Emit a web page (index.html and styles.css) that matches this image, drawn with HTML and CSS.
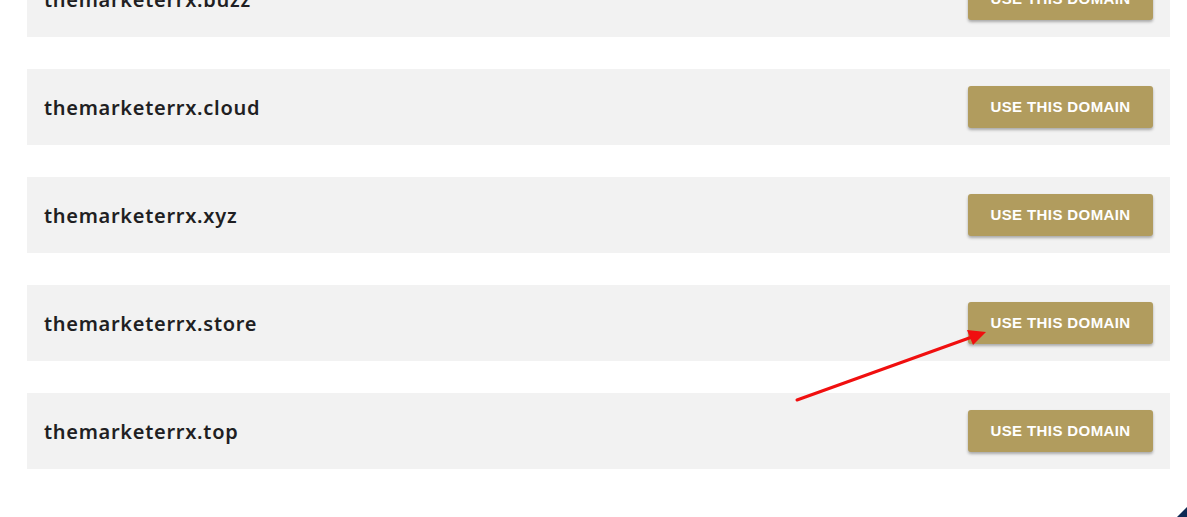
FILE: index.html
```html
<!DOCTYPE html>
<html lang="en">
<head>
  <meta charset="UTF-8" />
  <title>Domain Suggestions</title>
  <meta name="viewport" content="width=device-width, initial-scale=1.0" />
  <link rel="stylesheet" href="styles.css">
</head>
<body>
  <div class="container">
    <ul class="domain-list">
      <li class="domain-row">
        <span class="domain-name">themarketerrx.buzz</span>
        <button class="use-btn">USE THIS DOMAIN</button>
      </li>
      <li class="domain-row">
        <span class="domain-name">themarketerrx.cloud</span>
        <button class="use-btn">USE THIS DOMAIN</button>
      </li>
      <li class="domain-row">
        <span class="domain-name">themarketerrx.xyz</span>
        <button class="use-btn">USE THIS DOMAIN</button>
      </li>
      <li class="domain-row">
        <span class="domain-name">themarketerrx.store</span>
        <button class="use-btn">USE THIS DOMAIN</button>
      </li>
      <li class="domain-row">
        <span class="domain-name">themarketerrx.top</span>
        <button class="use-btn">USE THIS DOMAIN</button>
      </li>
    </ul>
  </div>

  <!-- annotation arrow pointing at the .store button -->
  <svg class="annotation" width="1187" height="517" viewBox="0 0 1187 517">
    <line x1="797" y1="400" x2="972" y2="337" stroke="#f00f0f" stroke-width="3" stroke-linecap="round" />
    <polygon points="986,332 967,330 973,345" fill="#f00f0f" />
  </svg>

  <div class="corner-tab"></div>
</body>
</html>
```

FILE: styles.css
```css
* {
  box-sizing: border-box;
  margin: 0;
  padding: 0;
}

html, body {
  height: 100%;
  overflow: hidden;
}

body {
  font-family: 'Liberation Sans', Arial, sans-serif;
  background: #ffffff;
  color: #222222;
  position: relative;
}

.container {
  padding: 0 17px 0 27px;
}

.domain-list {
  list-style: none;
  display: flex;
  flex-direction: column;
  gap: 32px;
  margin-top: -39px;
}

.domain-row {
  background: #f2f2f2;
  height: 76px;
  display: flex;
  align-items: center;
  justify-content: space-between;
  padding: 0 17px;
}

.domain-name {
  font-family: 'Noto Sans', 'Open Sans', sans-serif;
  font-weight: 600;
  font-size: 20px;
  color: #1f1f23;
  letter-spacing: 0.7px;
}

.use-btn {
  width: 185px;
  height: 42px;
  padding-bottom: 2px;
  background: #b19c5e;
  border: none;
  border-radius: 3px;
  color: #ffffff;
  font-family: 'Liberation Sans', Arial, sans-serif;
  font-weight: bold;
  font-size: 15px;
  letter-spacing: 0.4px;
  box-shadow: 0 2px 3px rgba(0, 0, 0, 0.3);
  cursor: pointer;
}

.annotation {
  position: absolute;
  left: 0;
  top: 0;
  pointer-events: none;
}

.corner-tab {
  position: absolute;
  left: 1188px;
  top: 506px;
  width: 20px;
  height: 20px;
  background: #0d2a55;
  transform: rotate(45deg);
  transform-origin: 0 0;
}
```
